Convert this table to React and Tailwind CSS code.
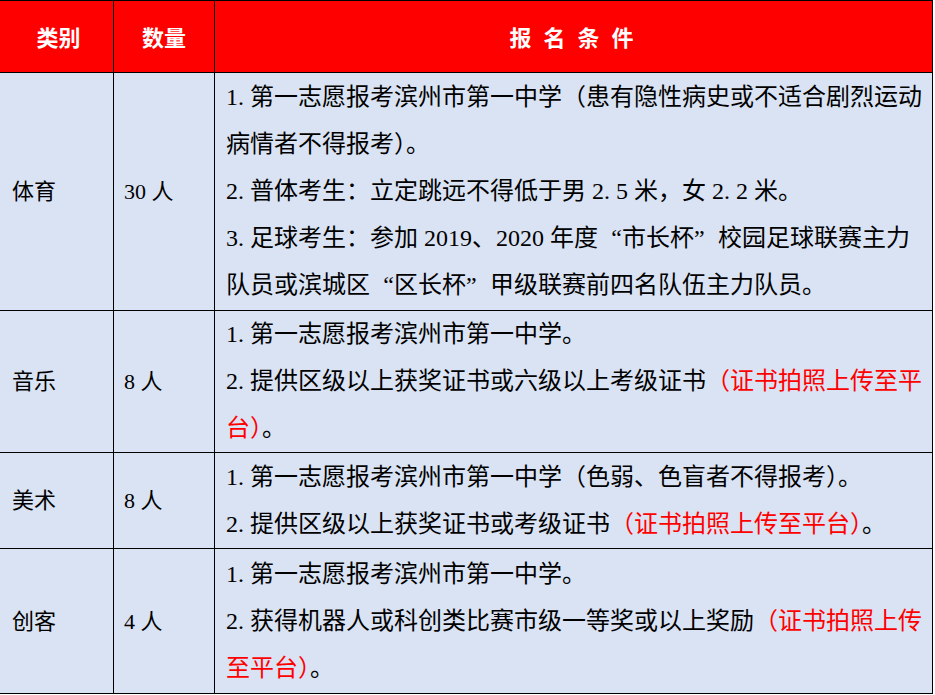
import React from 'react';

const RED = 'text-[#ff0000]';

// half-width numbers as in the source: every digit and dot takes 12px
const N = ({ children }) => (
  <span>
    {children.split('').map((c, i) =>
      c === '.' ? (
        <span key={i} className="inline-block w-[12px]">.</span>
      ) : (
        <span key={i}>{c}</span>
      )
    )}
  </span>
);

// full-width curly quotes
const LQ = () => <span className="inline-block w-[24px] text-right">“</span>;
const RQ = () => <span className="inline-block w-[24px] text-left">”</span>;

const rows = [
  {
    name: '体育',
    count: '30',
    height: 'h-[238px]',
    lines: [
      <><N>1.</N>第一志愿报考滨州市第一中学（患有隐性病史或不适合剧烈运动</>,
      <>病情者不得报考）。</>,
      <><N>2.</N>普体考生：立定跳远不得低于男 <N>2.5</N> 米，女 <N>2.2</N> 米。</>,
      <><N>3.</N>足球考生：参加 <N>2019</N>、<N>2020</N> 年度<LQ />市长杯<RQ />校园足球联赛主力</>,
      <>队员或滨城区<LQ />区长杯<RQ />甲级联赛前四名队伍主力队员。</>,
    ],
  },
  {
    name: '音乐',
    count: '8',
    height: 'h-[142px]',
    lines: [
      <><N>1.</N>第一志愿报考滨州市第一中学。</>,
      <><N>2.</N>提供区级以上获奖证书或六级以上考级证书<span className={RED}>（证书拍照上传至平</span></>,
      <><span className={RED}>台）</span>。</>,
    ],
  },
  {
    name: '美术',
    count: '8',
    height: 'h-[96px]',
    lines: [
      <><N>1.</N>第一志愿报考滨州市第一中学（色弱、色盲者不得报考）。</>,
      <><N>2.</N>提供区级以上获奖证书或考级证书<span className={RED}>（证书拍照上传至平台）</span>。</>,
    ],
  },
  {
    name: '创客',
    count: '4',
    height: 'h-[144px]',
    lines: [
      <><N>1.</N>第一志愿报考滨州市第一中学。</>,
      <><N>2.</N>获得机器人或科创类比赛市级一等奖或以上奖励<span className={RED}>（证书拍照上传</span></>,
      <><span className={RED}>至平台）</span>。</>,
    ],
  },
];

export default function App() {
  return (
    <div className="min-h-screen bg-white font-['Liberation_Serif','Noto_Sans_CJK_SC',serif] text-black">
      <div className="w-[933px] border-t border-r border-b border-black">
        {/* header */}
        <div className="flex h-[72px] border-b border-black bg-[#ff0000] text-white font-['Noto_Sans_CJK_SC',sans-serif] text-[22px] font-bold">
          <div className="w-[114px] border-r border-black flex items-center justify-center pl-1">类别</div>
          <div className="w-[101px] border-r border-black flex items-center justify-center">数量</div>
          <div className="flex-1 flex items-center justify-center tracking-[12px] pl-2">报名条件</div>
        </div>

        {rows.map((row, i) => (
          <div
            key={row.name}
            className={`flex bg-[#dae3f3] ${row.height} ${i < rows.length - 1 ? 'border-b border-black' : ''}`}
          >
            <div className="w-[114px] border-r border-black flex items-center pl-3 text-[22px]">
              {row.name}
            </div>
            <div className="w-[101px] border-r border-black flex items-center pl-[10px] text-[22px]">
              {row.count} 人
            </div>
            <div className="flex-1 flex flex-col justify-center pl-[11px] text-[24px] leading-[47px] whitespace-nowrap">
              {row.lines.map((line, j) => (
                <div key={j}>{line}</div>
              ))}
            </div>
          </div>
        ))}
      </div>
      <div className="ml-[448px] mt-px w-[35px] h-[2px] bg-[#7a8591]" />
    </div>
  );
}
